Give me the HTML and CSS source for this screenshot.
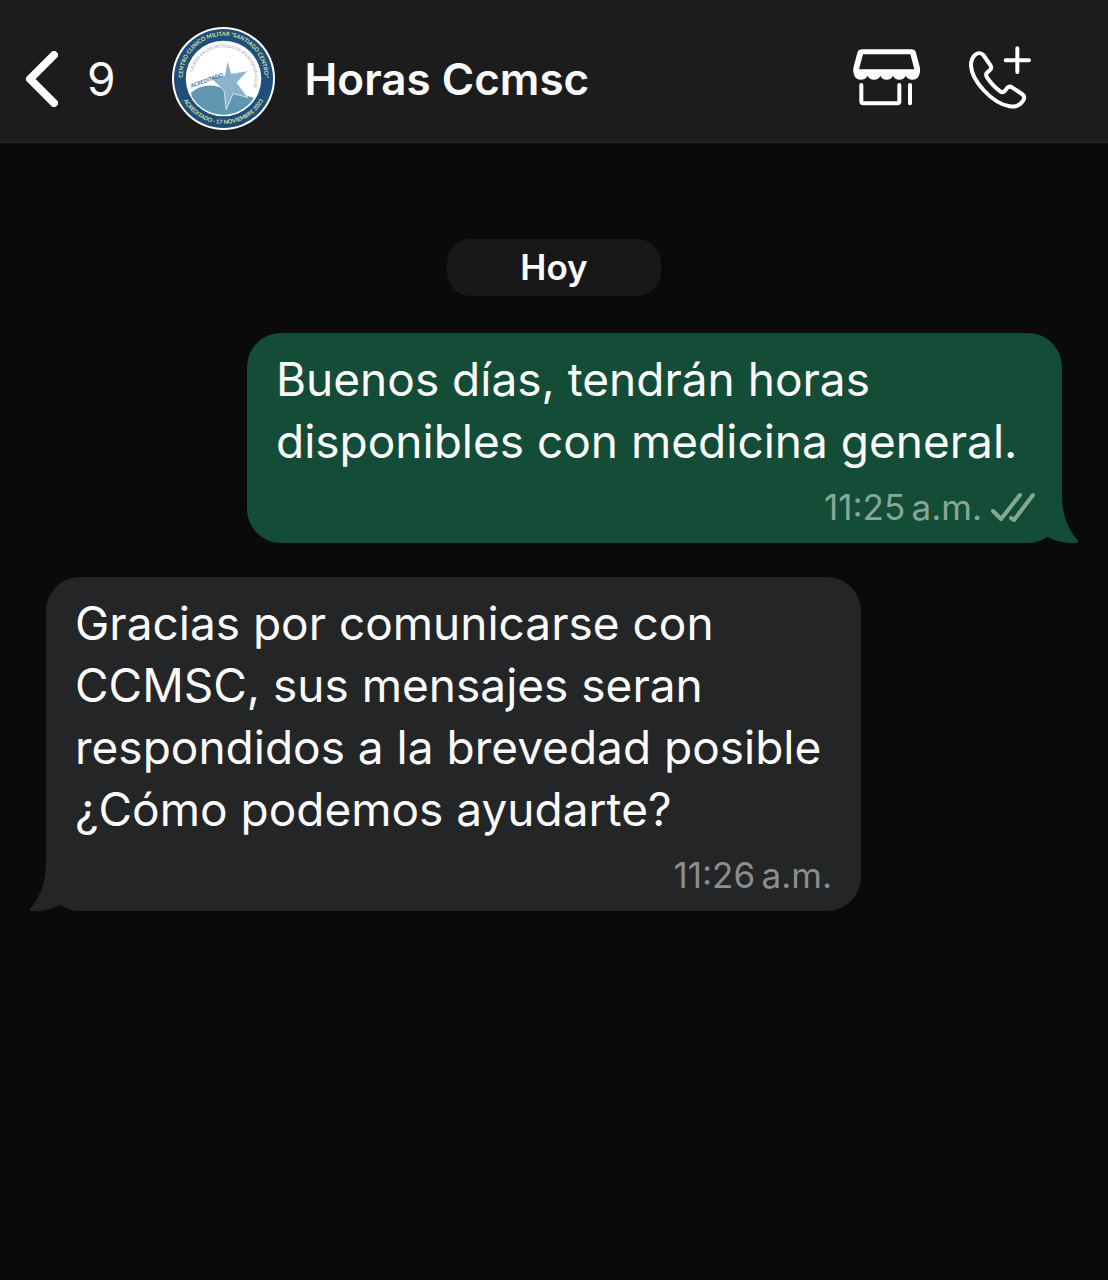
FILE: index.html
```html
<!DOCTYPE html>
<html lang="es">
<head>
<meta charset="utf-8">
<meta name="viewport" content="width=device-width, initial-scale=1">
<title>Horas Ccmsc</title>
<link rel="stylesheet" href="styles.css">
</head>
<body>
	<header class="topbar">
		<button type="button" class="back" aria-label="Volver, 9 chats sin leer">
			<svg class="chevron" viewBox="0 0 34 56" aria-hidden="true">
				<path d="M30 4 L6 28 L30 52" />
			</svg>
			<span class="unread">9</span>
		</button>
		<svg class="avatar" viewBox="21 21 308 308" role="img" aria-label="Centro Clínico Militar">
			<defs>
				<path id="ringTop" d="M54 185 A122 122 0 1 1 296 185" />
				<path id="ringBottom" d="M39 175 A136 136 0 0 0 311 175" />
				<path id="innerTop" d="M81 168 A94 94 0 1 1 260 215" />
			</defs>
			<circle cx="175" cy="175" r="154" fill="#fff" />
			<circle cx="175" cy="175" r="148" fill="#1f4e7b" />
			<circle cx="175" cy="175" r="113" fill="#fff" />
			<path d="M78 217 Q110 192 148 197 Q200 212 266 233 A108 108 0 0 1 80 228 Z" fill="#5f97b0" />
			<path d="M187 122 L199 160 L248 152 L215 188 L248 232 L204 220 L183 268 L177 212 L134 171 L178 167 Z" fill="#8db3cc" stroke="#fff" stroke-width="2" />
			<text class="ring-text"><textPath href="#ringTop" startOffset="50%">CENTRO CLINICO MILITAR "SANTIAGO CENTRO"</textPath></text>
			<text class="ring-text"><textPath href="#ringBottom" startOffset="50%">ACREDITADO · 17 NOVIEMBRE 2023</textPath></text>
			<text class="inner-text"><textPath href="#innerTop" startOffset="50%">CALIDAD EN LOS PROCESOS DE ATENCION EN SALUD</textPath></text>
			<text class="seal-text" x="79" y="203" transform="rotate(-20 79 203)">ACREDITADO</text>
		</svg>
		<h1 class="name">Horas Ccmsc</h1>
		<div class="actions">
			<button type="button" class="action" aria-label="Ver tienda">
				<svg class="store" viewBox="35 50 210 192" aria-hidden="true">
					<path class="solid" fill-rule="evenodd" d="M66 57 H212 Q224 57 227 67 L239 113 Q241 130 232 142 Q227 148 217 148 Q202 148 196 136 Q191 148 177 148 Q163 148 158 136 Q153 148 139 148 Q125 148 120 136 Q115 148 101 148 Q87 148 82 136 Q76 148 61 148 Q51 148 46 142 Q37 130 39 113 L51 67 Q54 57 66 57 Z M68 72 L56 117 H222 L210 72 Z" />
					<path class="line" d="M63 164 V213 Q63 219 69 219 H171 Q177 219 177 213 V164 M209 164 V219" />
				</svg>
			</button>
			<button type="button" class="action" aria-label="Llamar">
				<svg class="phone" viewBox="380 40 198 210" aria-hidden="true">
					<path class="line" d="M405 72 C412 66 423 66 429 73 L451 105 C454 110 453 114 449 118 L440 126 C436 130 437 135 440 140 C452 158 466 172 480 182 C485 186 490 185 494 180 L501 171 C505 167 510 167 515 170 L545 190 C552 195 553 202 549 209 C540 224 525 230 508 227 C455 218 394 150 392 105 C392 90 395 80 405 72 Z" />
					<path class="line" d="M531 53 V124 M496 89 H566" />
				</svg>
			</button>
		</div>
	</header>

	<main class="chat">
		<div class="day">Hoy</div>

		<article class="bubble sent">
			<p class="text">Buenos días, tendrán horas disponibles con medicina general.</p>
			<div class="meta">
				<time datetime="11:25">11:25&thinsp;a.m.</time>
				<svg class="checks" viewBox="0 0 46 32" role="img" aria-label="Entregado">
					<path d="M3 20 L11 28 L30 4" />
					<path d="M21 27 L24 29 L43 4" />
				</svg>
			</div>
			<svg class="tail" viewBox="0 0 50 48" aria-hidden="true">
				<path d="M14 0 H33 C33 20 39 34 49 46 Q50 48 46 48 C35 48 26 46 19 42 L14 36 Z" />
			</svg>
		</article>

		<article class="bubble received">
			<p class="text">Gracias por comunicarse con CCMSC, sus mensajes seran respondidos a la brevedad posible ¿Cómo podemos ayudarte?</p>
			<div class="meta">
				<time datetime="11:26">11:26&thinsp;a.m.</time>
			</div>
			<svg class="tail" viewBox="0 0 50 48" aria-hidden="true">
				<path d="M14 0 H33 C33 20 39 34 49 46 Q50 48 46 48 C35 48 26 46 19 42 L14 36 Z" />
			</svg>
		</article>
	</main>
</body>
</html>
```

FILE: styles.css
```css
* {
	margin: 0;
	padding: 0;
	box-sizing: border-box;
}

body {
	min-height: 100vh;
	background: #0a0a0a;
	color: #fafafa;
	font-family: Inter, "Liberation Sans", sans-serif;
}

button {
	border: none;
	background: none;
	color: inherit;
	font: inherit;
	cursor: pointer;
}

svg {
	display: block;
}

/* top bar */
.topbar {
	display: flex;
	align-items: center;
	padding: 27px 75px 12px 24px;
	background: #1c1c1c;
	border-bottom: 1px solid #2c2e2d;
}

.back {
	display: flex;
	align-items: center;
	gap: 29px;
	margin-right: 56px;
}

.chevron {
	width: 34px;
	height: 56px;
	fill: none;
	stroke: #fff;
	stroke-width: 8;
	stroke-linecap: round;
	stroke-linejoin: round;
}

.unread {
	font-size: 46px;
	line-height: 62px;
}

.avatar {
	width: 103px;
	height: 103px;
	flex: none;
}

.ring-text {
	font-family: Lato, sans-serif;
	font-size: 17px;
	font-weight: bold;
	fill: #dfe3a0;
	text-anchor: middle;
}

.inner-text {
	font-family: Lato, sans-serif;
	font-size: 12px;
	fill: #939ba5;
	text-anchor: middle;
}

.seal-text {
	font-family: Lato, sans-serif;
	font-size: 16px;
	font-weight: bold;
	fill: #3f6c8c;
}

.name {
	flex: 1;
	margin-left: 30px;
	font-size: 44px;
	font-weight: 600;
	line-height: 62px;
}

.actions {
	display: flex;
	align-items: center;
	gap: 45px;
}

.solid {
	fill: #fff;
}

.line {
	fill: none;
	stroke: #fff;
	stroke-width: 12;
	stroke-linecap: round;
	stroke-linejoin: round;
}

.store {
	width: 70px;
	height: 64px;
}

.phone {
	width: 66px;
	height: 70px;
}

/* conversation */
.chat {
	display: flex;
	flex-direction: column;
	align-items: flex-start;
	padding: 96px 46px 34px;
}

.day {
	align-self: center;
	margin-bottom: 37px;
	padding: 0 73px;
	border-radius: 24px;
	background: #181818;
	font-size: 35px;
	font-weight: 600;
	line-height: 57px;
}

.bubble {
	position: relative;
	max-width: 815px;
	margin-bottom: 34px;
	padding: 15px 29px;
	border-radius: 34px;
}

.sent {
	align-self: flex-end;
	padding-right: 26px;
	background: #144d37;
	fill: #144d37;
}

.received {
	background: #242527;
	fill: #242527;
}

.text {
	font-size: 46px;
	line-height: 62px;
}

.meta {
	display: flex;
	justify-content: flex-end;
	align-items: center;
	gap: 8px;
	margin-top: 14px;
	color: #8c8d8f;
	font-size: 35px;
	line-height: 42px;
}

.sent .meta {
	color: #86a899;
}

.checks {
	width: 46px;
	height: 32px;
	fill: none;
	stroke: currentColor;
	stroke-width: 4;
	stroke-linecap: round;
	stroke-linejoin: round;
}

.tail {
	position: absolute;
	right: -17px;
	bottom: 0;
	width: 50px;
	height: 48px;
}

.received .tail {
	right: auto;
	left: -17px;
	transform: scaleX(-1);
}
```
